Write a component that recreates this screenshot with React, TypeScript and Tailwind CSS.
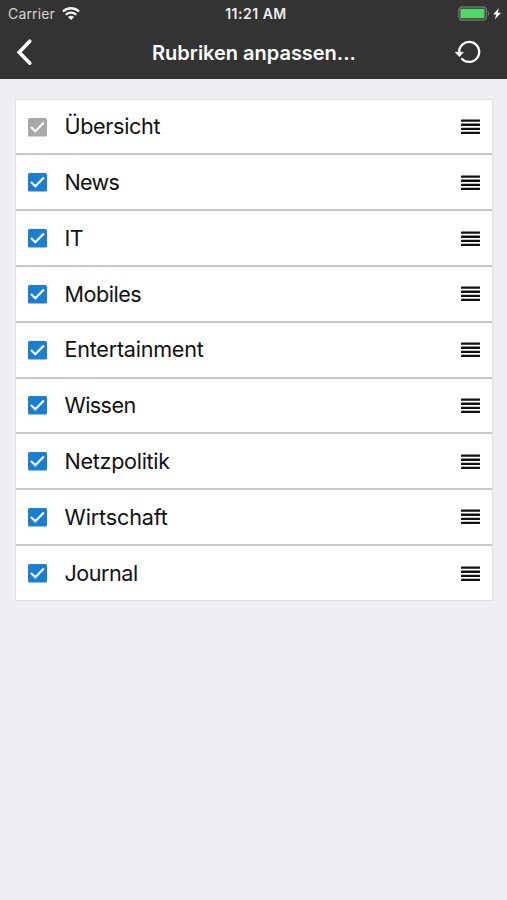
import React, { useState } from 'react';

interface Category {
    id: string;
    label: string;
    labelClass: string;
    locked?: boolean;
}

const CATEGORIES: Category[] = [
    { id: 'overview', label: 'Übersicht', labelClass: 'tracking-[-0.35px]', locked: true },
    { id: 'news', label: 'News', labelClass: 'tracking-[-0.7px]' },
    { id: 'it', label: 'IT', labelClass: 'tracking-[-0.5px]' },
    { id: 'mobile', label: 'Mobiles', labelClass: 'tracking-[-0.5px]' },
    { id: 'entertainment', label: 'Entertainment', labelClass: 'tracking-[-0.25px]' },
    { id: 'science', label: 'Wissen', labelClass: 'tracking-[-0.6px]' },
    { id: 'netpolitics', label: 'Netzpolitik', labelClass: 'tracking-[-0.3px]' },
    { id: 'economy', label: 'Wirtschaft', labelClass: 'tracking-[-0.15px]' },
    { id: 'journal', label: 'Journal', labelClass: 'tracking-[-0.5px]' },
];

const WifiIcon = () => (
    <svg width="18" height="13" viewBox="0 0 18 13" fill="none" stroke="#f4f4f4">
        <path d="M1 4.5a11.4 11.4 0 0 1 16 0" strokeWidth="2.4" />
        <path d="M3.8 7.7a7.4 7.4 0 0 1 10.4 0" strokeWidth="2.2" />
        <path d="M6 9.9a4.2 4.2 0 0 1 6 0L9 13z" fill="#f4f4f4" stroke="none" />
    </svg>
);

const BatteryIcon = () => (
    <svg width="44" height="16" viewBox="0 0 44 16">
        <rect x="0.8" y="1" width="27.6" height="13" rx="3.4" fill="none" stroke="#747276" strokeWidth="1.3" />
        <rect x="2.4" y="2.7" width="24.2" height="9.6" rx="1.2" fill="#52d769" />
        <path d="M29.9 5.2c1.7.5 1.7 4.1 0 4.6z" fill="#747276" />
        <path d="M41 2 35.1 8.4h3.2l-1.5 5 6.3-6.7h-3.4z" fill="#fff" />
    </svg>
);

const BackIcon = () => (
    <svg width="20" height="28" viewBox="0 0 20 28" fill="none" stroke="#fff" strokeWidth="3.6" strokeLinecap="round" strokeLinejoin="miter">
        <path d="M14.8 3.2 4.2 14.2 14.8 25.2" />
    </svg>
);

const ResetIcon = () => (
    <svg width="28" height="26" viewBox="0 0 28 26">
        <path d="M5.2 13.6A10 10 0 1 1 8.1 20" fill="none" stroke="#fff" strokeWidth="2.3" strokeLinecap="round" />
        <path d="M1.2 13.2h8.2l-4 4.5z" fill="#fff" stroke="#fff" strokeWidth="0.6" strokeLinejoin="round" />
    </svg>
);

// Four bars used as the drag handle of a row
const DragHandle = () => (
    <svg width="19" height="16" viewBox="0 0 19 16" fill="#111">
        <rect y="0.5" width="19" height="2.3" rx="0.5" />
        <rect y="4.6" width="19" height="2.3" rx="0.5" />
        <rect y="8.7" width="19" height="2.3" rx="0.5" />
        <rect y="12.8" width="19" height="2.3" rx="0.5" />
    </svg>
);

const CheckBox: React.FC<{ checked: boolean; locked?: boolean }> = ({ checked, locked }) => (
    <svg width="19" height="19" viewBox="0 0 19 19">
        <rect width="19" height="18.6" rx="1.5" fill={locked ? '#a8a8a8' : checked ? '#1a7fd2' : '#c7c7cc'} />
        {checked && <path d="m3 9.1 4.3 4.2 8.6-8.7" fill="none" stroke="#fff" strokeWidth="2.1" />}
    </svg>
);

export default function App() {
    const [hidden, setHidden] = useState<string[]>([]);

    const toggle = (category: Category) => {
        if (category.locked) return;
        setHidden(prev =>
            prev.includes(category.id) ? prev.filter(id => id !== category.id) : [...prev, category.id]
        );
    };

    return (
        <div className="h-screen w-full overflow-hidden bg-[#efeef3] font-['Inter','Liberation_Sans',sans-serif]">
            <header className="h-[79px] bg-[#333333] text-white">
                {/* Status bar */}
                <div className="grid h-[27px] grid-cols-3 items-center pl-2 pr-[5px]">
                    <div className="flex items-center gap-[7px]">
                        <span className="text-[14px] tracking-[0.15px] text-[#d5d5d5]">Carrier</span>
                        <WifiIcon />
                    </div>
                    <span className="pl-[2px] text-center text-[14px] font-semibold tracking-[0.5px] text-[#ededed]">11:21 AM</span>
                    <div className="flex justify-end">
                        <BatteryIcon />
                    </div>
                </div>

                {/* Navigation bar */}
                <div className="flex h-[50px] items-center justify-between pl-[15px] pr-[25px]">
                    <button className="w-[39px]">
                        <BackIcon />
                    </button>
                    <h1 className="pt-px text-[20px] font-semibold tracking-[-0.02px]">Rubriken anpassen...</h1>
                    <button className="w-[28px]">
                        <ResetIcon />
                    </button>
                </div>
            </header>

            <main className="pl-[15px] pr-[14px] pt-[19.7px]">
                <ul className="border border-[#e2e2e5] bg-white">
                    {CATEGORIES.map(category => (
                        <li
                            key={category.id}
                            onClick={() => toggle(category)}
                            className="flex h-[55.78px] items-center border-b-2 border-[#c8c8c9] pl-3 pr-3 pt-px last:h-[54.5px] last:border-b-0"
                        >
                            <CheckBox checked={!hidden.includes(category.id)} locked={category.locked} />
                            <span className={`ml-[17.5px] flex-1 pb-[1.6px] text-[21.6px] leading-7 text-[#111] ${category.labelClass}`}>
                                {category.label}
                            </span>
                            <DragHandle />
                        </li>
                    ))}
                </ul>
            </main>
        </div>
    );
}
